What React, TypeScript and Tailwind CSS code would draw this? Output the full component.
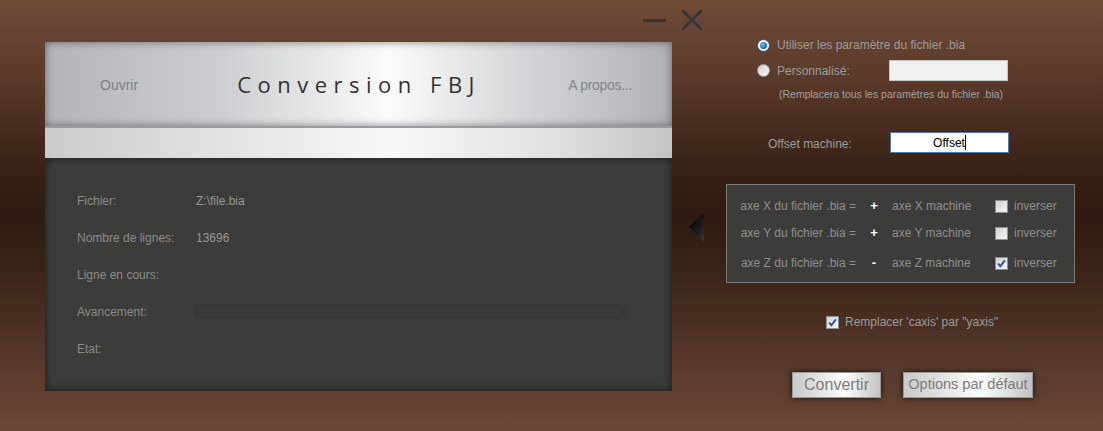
const rows = [
  { label: 'Fichier:', value: 'Z:\\file.bia' },
  { label: 'Nombre de lignes:', value: '13696' },
  { label: 'Ligne en cours:', value: '' },
  { label: 'Avancement:', value: 'progress' },
  { label: 'Etat:', value: '' },
];

const axes = [
  { axis: 'X', sign: '+', checked: false, gap: 'mt-0' },
  { axis: 'Y', sign: '+', checked: false, gap: 'mt-[7px]' },
  { axis: 'Z', sign: '-', checked: true, gap: 'mt-[10px]' },
];

function CheckBox({ checked }: { checked: boolean }) {
  return (
    <span className="relative flex h-[13px] w-[13px] shrink-0 items-center justify-center border border-[#8e8f8f] bg-[linear-gradient(135deg,#d2d2d2,#f5f5f5)]">
      {checked && (
        <svg viewBox="0 0 11 11" className="h-[11px] w-[11px]">
          <path d="M2.2 5.6 L4.4 8.2 L8.8 2.4" fill="none" stroke="#2c4ea3" strokeWidth="1.9" />
        </svg>
      )}
    </span>
  );
}

function Radio({ checked }: { checked: boolean }) {
  if (checked) {
    return (
      <span className="flex h-[13px] w-[13px] shrink-0 items-center justify-center rounded-full border border-[#3a5370] bg-[#f2f2f2]">
        <span className="h-[7px] w-[7px] rounded-full bg-[radial-gradient(circle_at_35%_35%,#6cc0f0,#1c7ccc_55%,#0b4a86)]" />
      </span>
    );
  }
  return (
    <span className="h-[13px] w-[13px] shrink-0 rounded-full border border-[#9c9c9c] bg-[linear-gradient(135deg,#cfcfcf,#fafafa)]" />
  );
}

function Panel() {
  return (
    <div className="flex h-[349px] w-[627px] flex-col">
      <div className="flex h-[84px] items-center bg-[linear-gradient(to_right,#b3b4b8,#cdced1_28%,#fbfbfb_55%,#d2d3d6_78%,#b0b1b5)] pl-[55px] pr-[40px] shadow-[inset_0_0_9px_rgba(0,0,0,0.45)]">
        <span className="mt-[2px] text-[14px] text-[#7e7f84]">Ouvrir</span>
        <span className="ml-[99px] font-['Open_Sans',sans-serif] text-[22px] tracking-[6.5px] text-[#333333]">
          Conversion FBJ
        </span>
        <span className="ml-auto mt-[2px] text-[14px] tracking-[-0.3px] text-[#86878b]">A propos...</span>
      </div>
      <div className="h-[32px] border-t-2 border-[#9a9b9e] bg-[linear-gradient(to_right,#cbcbcb,#e4e4e4_30%,#f8f8f8_55%,#e2e2e2_80%,#c4c4c4)]" />
      <div className="flex flex-1 flex-col bg-[#3c3c3a] pl-[32px] pt-[24px] shadow-[inset_0_0_10px_rgba(0,0,0,0.55)]">
        {rows.map((r) => (
          <div key={r.label} className="flex h-[37px] items-center text-[12px]">
            <span className="w-[119px] text-[#8a8a88]">{r.label}</span>
            {r.value === 'progress' ? (
              <div className="ml-[1px] h-[11px] w-[426px] bg-[#393937] shadow-[0_0_4px_rgba(0,0,0,0.3)]" />
            ) : (
              <span className="text-[#979795]">{r.value}</span>
            )}
          </div>
        ))}
      </div>
    </div>
  );
}

export default function App() {
  return (
    <div className="flex h-[431px] w-[1103px] overflow-hidden bg-[linear-gradient(to_bottom,#704b38_0%,#5a3a2a_18%,#3a2317_38%,#2e1a10_50%,#3c2619_65%,#54372a_82%,#6b4736_100%)] font-['Liberation_Sans',Arial,sans-serif]">
      <div className="ml-[45px] flex w-[660px] flex-col">
        <div className="flex h-[42px] items-start justify-end gap-[15px] pr-[2px] pt-[9px]">
          <svg viewBox="0 0 23 22" className="h-[22px] w-[23px]">
            <path d="M0 11.5 H23" stroke="#363636" strokeWidth="3" />
          </svg>
          <svg viewBox="0 0 22 22" className="h-[22px] w-[22px]">
            <path d="M1.5 1.5 L20.5 20.5 M20.5 1.5 L1.5 20.5" stroke="#363636" strokeWidth="3" />
          </svg>
        </div>
        <div className="flex items-start">
          <Panel />
          <svg viewBox="0 0 15 30" className="ml-[17px] mt-[170px] h-[30px] w-[15px]">
            <defs>
              <linearGradient id="tri" x1="0" y1="0" x2="1" y2="1">
                <stop offset="0" stopColor="#000000" />
                <stop offset="0.6" stopColor="#1a1a1a" />
                <stop offset="1" stopColor="#3a3a3a" />
              </linearGradient>
            </defs>
            <path d="M15 0 L0 15 L15 30 Z" fill="url(#tri)" />
          </svg>
        </div>
      </div>

      <div className="ml-[21px] flex w-[349px] flex-col text-[12px] text-[#9b9b9b]">
        <div className="mt-[37px] flex h-[16px] items-center gap-[7px] pl-[31px]">
          <Radio checked />
          <span>Utiliser les paramètre du fichier .bia</span>
        </div>
        <div className="mt-[7px] flex h-[21px] items-center pl-[31px]">
          <Radio checked={false} />
          <span className="ml-[7px] w-[112px]">Personnalisé:</span>
          <div className="h-[21px] w-[119px] border border-[#c4c4c4] bg-[#f0f0f0]" />
        </div>
        <div className="mt-[7px] pl-[53px] text-[10.5px] leading-[13px] text-[#a0a0a0]">
          (Remplacera tous les paramètres du fichier .bia)
        </div>
        <div className="mt-[31px] flex h-[21px] items-center pl-[42px]">
          <span className="mt-[3px] w-[122px]">Offset machine:</span>
          <div className="flex h-[21px] w-[119px] items-center justify-center border border-[#4a7aa6] bg-white text-[12px] text-black">
            <span>Offset</span>
            <span className="h-[15px] w-[1px] bg-black" />
          </div>
        </div>

        <div className="mt-[31px] flex h-[99px] flex-col border border-[#7b7b7b] bg-[#3c3c3a] pt-[11px] text-[#8e8e8c]">
          {axes.map((a) => (
            <div key={a.axis} className={`flex h-[20px] items-center ${a.gap}`}>
              <span className="w-[129px] text-right">{`axe ${a.axis} du fichier .bia =`}</span>
              <span className="w-[36px] text-center text-[13px] font-bold text-white">{a.sign}</span>
              <span className="w-[103px]">{`axe ${a.axis} machine`}</span>
              <CheckBox checked={a.checked} />
              <span className="ml-[6px]">inverser</span>
            </div>
          ))}
        </div>

        <div className="mt-[31px] flex h-[16px] items-center gap-[6px] pl-[100px]">
          <CheckBox checked />
          <span>{`Remplacer 'caxis' par "yaxis"`}</span>
        </div>

        <div className="mt-[42px] flex items-center gap-[22px] pl-[66px]">
          <button className="flex h-[26px] w-[89px] items-center justify-center border border-[#9a9a9a] bg-[linear-gradient(to_right,#c9c9c9,#f0f0f0_45%,#fdfdfd_60%,#c2c2c2)] text-[16px] text-[#7c7c7c] shadow-[0_0_6px_rgba(0,0,0,0.75)]">
            Convertir
          </button>
          <button className="flex h-[26px] w-[130px] items-center justify-center border border-[#9a9a9a] bg-[linear-gradient(to_right,#c9c9c9,#f0f0f0_45%,#fdfdfd_60%,#c2c2c2)] text-[14.5px] text-[#7c7c7c] shadow-[0_0_6px_rgba(0,0,0,0.75)]">
            Options par défaut
          </button>
        </div>
      </div>
    </div>
  );
}
